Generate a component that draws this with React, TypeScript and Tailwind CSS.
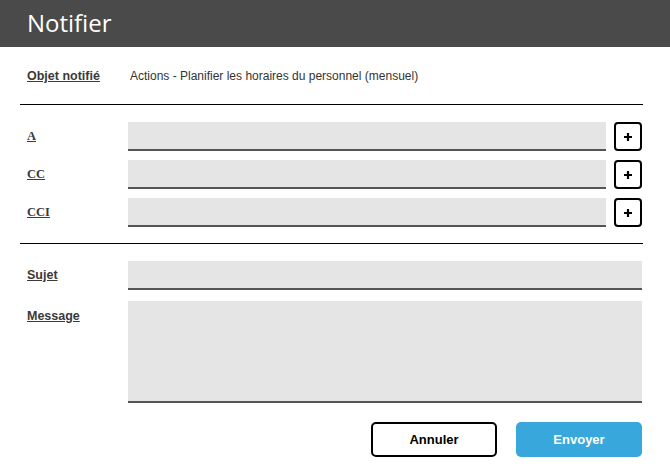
import React from 'react';

const labelSans = "font-['Liberation_Sans',Arial,sans-serif] text-[12.5px] font-bold text-[#3a3a3a] underline";
const labelSerif = "font-['Liberation_Serif','Times_New_Roman',serif] text-[12.5px] font-bold text-[#3a3a3a] underline";
const field = 'bg-[#e5e5e5] border-b-2 border-[#555555]';

function PlusButton() {
  return (
    <button className="w-[28px] h-[29px] shrink-0 border-2 border-black rounded-[4px] bg-white flex items-center justify-center">
      <svg width="10" height="10" viewBox="0 0 10 10">
        <path d="M5 1v8M1 5h8" stroke="#000" strokeWidth="2.2" />
      </svg>
    </button>
  );
}

function RecipientRow({ label }: { label: string }) {
  return (
    <div className="flex items-center h-[29px]">
      <span className={`w-[101px] shrink-0 ${labelSerif}`}>{label}</span>
      <div className={`flex-1 h-full ${field}`} />
      <div className="ml-[8px]">
        <PlusButton />
      </div>
    </div>
  );
}

export default function App() {
  return (
    <div className="w-[670px] h-[475px] bg-white font-['Liberation_Sans',Arial,sans-serif]">
      <div className="h-[47px] bg-[#4a4a4a] flex items-center pl-[27px] pb-[2px]">
        <h1 className="text-white text-[24px] font-['Open_Sans',sans-serif]">Notifier</h1>
      </div>

      <div className="pl-[20px] pr-[27px]">
        <div className="h-[57px] flex items-center pl-[7px] pt-[1px]">
          <span className={`w-[103px] shrink-0 ${labelSans}`}>Objet notifié</span>
          <span className="text-[12px] text-[#333333]">Actions - Planifier les horaires du personnel (mensuel)</span>
        </div>
        <div className="h-px bg-black" />

        <div className="pl-[7px] pr-[1px] mt-[17px] flex flex-col gap-[9px]">
          <RecipientRow label="A" />
          <RecipientRow label="CC" />
          <RecipientRow label="CCI" />
        </div>

        <div className="h-px bg-black mt-[16px]" />

        <div className="pl-[7px] pr-[1px] mt-[17px]">
          <div className="flex items-center h-[29px]">
            <span className={`w-[101px] shrink-0 ${labelSans}`}>Sujet</span>
            <div className={`flex-1 h-full ${field}`} />
          </div>
          <div className="flex items-start h-[102px] mt-[11px]">
            <span className={`w-[101px] shrink-0 pt-[6px] ${labelSans}`}>Message</span>
            <div className={`flex-1 h-full ${field}`} />
          </div>
          <div className="flex justify-end gap-[19px] mt-[19px]">
            <button className="w-[126px] h-[35px] border-2 border-black rounded-[5px] bg-white text-[13px] font-bold text-black">
              Annuler
            </button>
            <button className="w-[126px] h-[35px] rounded-[5px] bg-[#38a8dc] text-[13px] font-bold text-white">
              Envoyer
            </button>
          </div>
        </div>
      </div>
    </div>
  );
}
